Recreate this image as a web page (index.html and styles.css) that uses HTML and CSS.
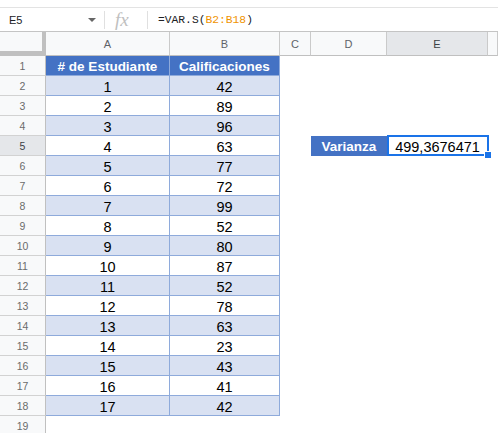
FILE: index.html
```html
<!DOCTYPE html>
<html lang="es">
<head>
<meta charset="utf-8">
<title>VAR.S</title>
<link rel="stylesheet" href="styles.css">
</head>
<body>
<div class="topstrip"></div>
<div class="fbar">
  <div class="namebox"><span class="nb-text">E5</span><span class="tri"></span></div>
  <div class="sep"></div>
  <div class="fx">fx</div>
  <div class="sep"></div>
  <div class="formula">=VAR.S(<span class="ref">B2:B18</span>)</div>
</div>
<div class="sheet">
  <div class="row hdr">
    <div class="corner"><div class="hbar"></div></div>
    <div class="ch">A</div><div class="ch">B</div><div class="ch">C</div><div class="ch">D</div><div class="ch sel-h">E</div><div class="ch"></div>
  </div>
  <div class="row"><div class="rh">1</div><div class="th">#&nbsp;de Estudiante</div><div class="th">Calificaciones</div></div>
  <div class="row"><div class="rh">2</div><div class="td alt">1</div><div class="td alt">42</div></div>
  <div class="row"><div class="rh">3</div><div class="td">2</div><div class="td">89</div></div>
  <div class="row"><div class="rh">4</div><div class="td alt">3</div><div class="td alt">96</div></div>
  <div class="row"><div class="rh sel-h">5</div><div class="td">4</div><div class="td">63</div><div class="empty"></div><div class="lbl">Varianza</div><div class="val">499,3676471</div></div>
  <div class="row"><div class="rh">6</div><div class="td alt">5</div><div class="td alt">77</div></div>
  <div class="row"><div class="rh">7</div><div class="td">6</div><div class="td">72</div></div>
  <div class="row"><div class="rh">8</div><div class="td alt">7</div><div class="td alt">99</div></div>
  <div class="row"><div class="rh">9</div><div class="td">8</div><div class="td">52</div></div>
  <div class="row"><div class="rh">10</div><div class="td alt">9</div><div class="td alt">80</div></div>
  <div class="row"><div class="rh">11</div><div class="td">10</div><div class="td">87</div></div>
  <div class="row"><div class="rh">12</div><div class="td alt">11</div><div class="td alt">52</div></div>
  <div class="row"><div class="rh">13</div><div class="td">12</div><div class="td">78</div></div>
  <div class="row"><div class="rh">14</div><div class="td alt">13</div><div class="td alt">63</div></div>
  <div class="row"><div class="rh">15</div><div class="td">14</div><div class="td">23</div></div>
  <div class="row"><div class="rh">16</div><div class="td alt">15</div><div class="td alt">43</div></div>
  <div class="row"><div class="rh">17</div><div class="td">16</div><div class="td">41</div></div>
  <div class="row"><div class="rh">18</div><div class="td alt">17</div><div class="td alt">42</div></div>
  <div class="row"><div class="rh">19</div></div>
</div>
</body>
</html>
```
FILE: styles.css
```css
html, body {
  margin: 0;
  padding: 0;
  height: 100%;
  overflow: hidden;
  background: #fff;
  font-family: "Liberation Sans", Arial, sans-serif;
}
* { box-sizing: border-box; }

.topstrip {
  height: 8px;
  border-bottom: 1px solid #e3e3e3;
}

.fbar {
  height: 24px;
  border-bottom: 1px solid #c4c4c4;
  display: flex;
  align-items: center;
}
.namebox {
  width: 104px;
  height: 100%;
  display: flex;
  align-items: center;
  padding-left: 9px;
  font-size: 11px;
  color: #202124;
}
.nb-text { flex: 1; }
.tri {
  width: 0;
  height: 0;
  border-left: 4px solid transparent;
  border-right: 4px solid transparent;
  border-top: 4px solid #666;
  margin-right: 8px;
}
.sep {
  width: 1px;
  height: 18px;
  background: #e0e0e0;
}
.fx {
  width: 42px;
  padding-left: 10px;
  font-family: "Liberation Serif", serif;
  font-style: italic;
  font-size: 19px;
  color: #c0c0c0;
  line-height: 20px;
}
.formula {
  padding-left: 10px;
  font-family: "Liberation Mono", monospace;
  font-size: 11.3px;
  color: #202124;
}
.ref { color: #f09300; }

.sheet { display: block; }
.row {
  display: grid;
  grid-template-columns: 46px 124px 110px 31px 76px 101px 1fr;
  height: 20px;
}
.row.hdr { height: 24px; }

.corner {
  background: #f8f9fa;
  border-right: 4px solid #c0c0c0;
  border-bottom: 1px solid #c0c0c0;
  display: flex;
  flex-direction: column;
  justify-content: flex-end;
}
.hbar {
  height: 4px;
  background: #c0c0c0;
}

.ch {
  background: #f8f9fa;
  border-right: 1px solid #cacaca;
  border-bottom: 1px solid #c0c0c0;
  display: flex;
  align-items: center;
  justify-content: center;
  font-size: 11px;
  color: #5f6368;
}
.rh {
  background: #f8f9fa;
  border-right: 1px solid #c0c0c0;
  border-bottom: 1px solid #d2d2d2;
  display: flex;
  align-items: center;
  justify-content: center;
  font-size: 10.5px;
  color: #6b6b6b;
}
.sel-h {
  background: #e5e7ea;
  color: #3c4043;
}

.th {
  background: #4472c4;
  color: #fff;
  font-weight: bold;
  font-size: 13.5px;
  line-height: 15px;
  padding-bottom: 1px;
  border-right: 1px solid #8eaadb;
  border-bottom: 1px solid #8eaadb;
  display: flex;
  align-items: flex-end;
  justify-content: center;
}
.td {
  background: #fff;
  color: #000;
  font-size: 14.5px;
  line-height: 16px;
  border-right: 1px solid #8eaadb;
  border-bottom: 1px solid #8eaadb;
  display: flex;
  align-items: flex-end;
  justify-content: center;
}
.td.alt { background: #d9e1f2; }

.lbl {
  background: #4472c4;
  color: #fff;
  font-weight: bold;
  font-size: 13.5px;
  line-height: 15px;
  padding-bottom: 2px;
  display: flex;
  align-items: flex-end;
  justify-content: center;
}
.val {
  position: relative;
  color: #000;
  font-size: 14.5px;
  line-height: 16px;
  padding-bottom: 1px;
  display: flex;
  align-items: flex-end;
  justify-content: center;
}
.val::before {
  content: "";
  position: absolute;
  left: 0;
  top: -1px;
  right: -1px;
  bottom: 0;
  border: 2px solid #1a73e8;
}
.val::after {
  content: "";
  position: absolute;
  right: -3px;
  bottom: -2px;
  width: 6px;
  height: 6px;
  background: #1a73e8;
  outline: 1px solid #fff;
  z-index: 2;
}
```
